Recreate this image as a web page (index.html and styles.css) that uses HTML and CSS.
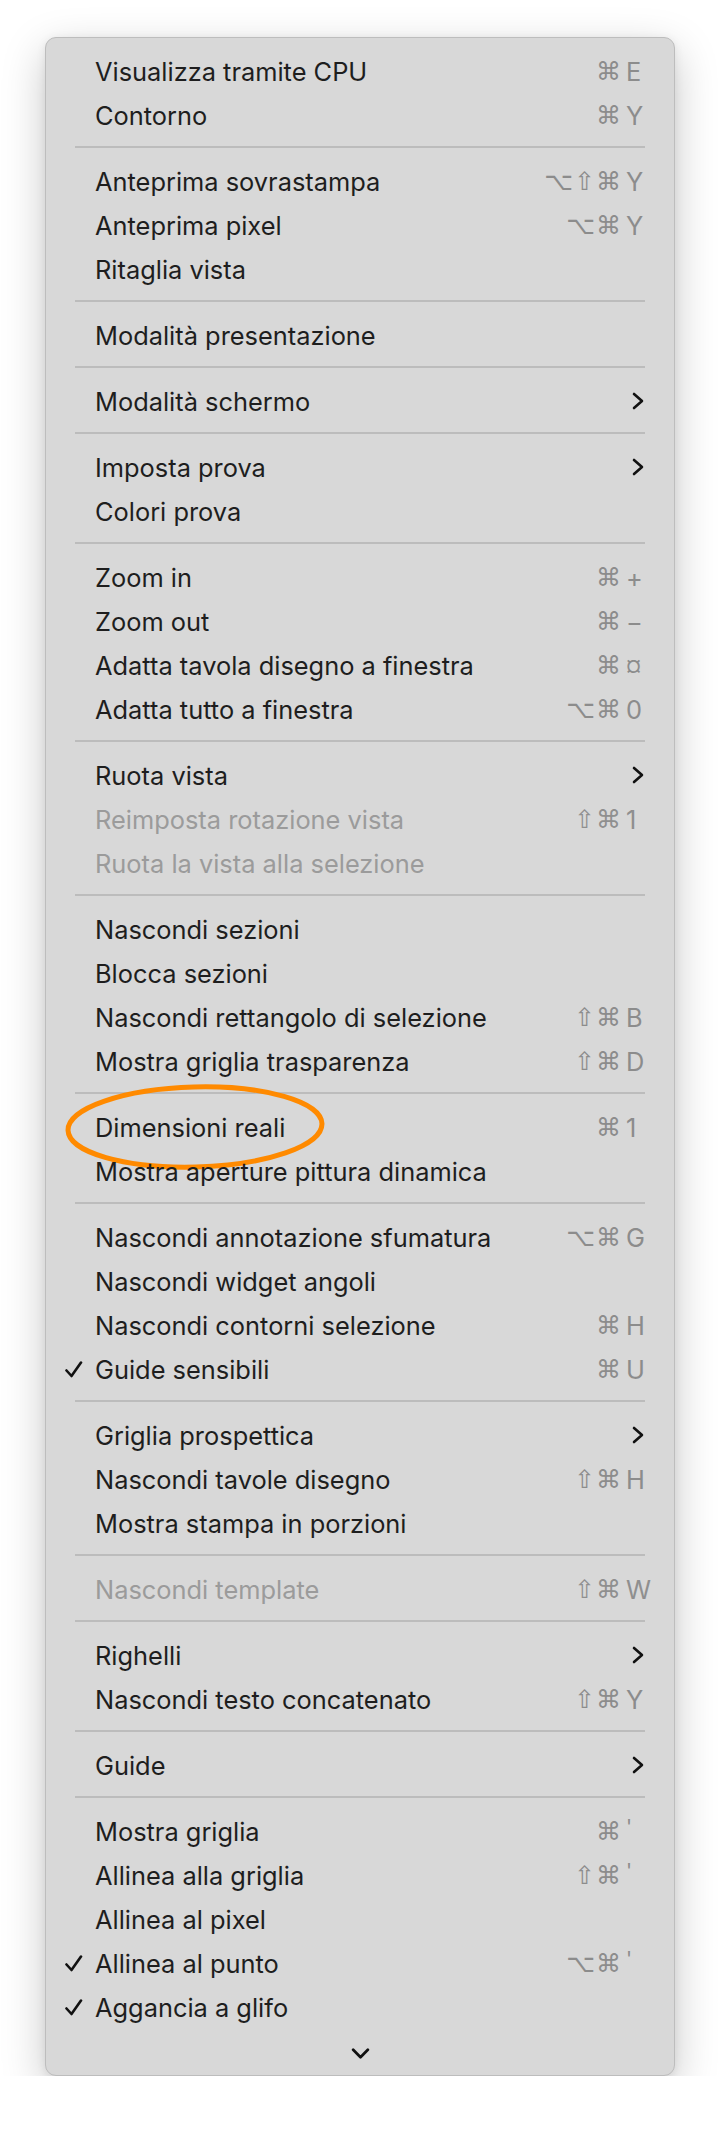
FILE: index.html
```html
<!DOCTYPE html>
<html lang="it">
<head>
    <meta charset="UTF-8">
    <meta name="viewport" content="width=device-width, initial-scale=1.0">
    <title>Menu Visualizza</title>
    <link rel="stylesheet" href="styles.css">
</head>
<body>
    <div class="menu">
        <div class="item"><span class="check"></span><span class="label">Visualizza tramite CPU</span><span class="mods">⌘</span><span class="key">E</span></div>
        <div class="item"><span class="check"></span><span class="label">Contorno</span><span class="mods">⌘</span><span class="key">Y</span></div>
        <div class="sep"></div>
        <div class="item"><span class="check"></span><span class="label">Anteprima sovrastampa</span><span class="mods">⌥⇧⌘</span><span class="key">Y</span></div>
        <div class="item"><span class="check"></span><span class="label">Anteprima pixel</span><span class="mods">⌥⌘</span><span class="key">Y</span></div>
        <div class="item"><span class="check"></span><span class="label">Ritaglia vista</span></div>
        <div class="sep"></div>
        <div class="item"><span class="check"></span><span class="label">Modalità presentazione</span></div>
        <div class="sep"></div>
        <div class="item"><span class="check"></span><span class="label">Modalità schermo</span><svg class="sub" viewBox="0 0 12 18"><polyline points="2,2 10,9 2,16"/></svg></div>
        <div class="sep"></div>
        <div class="item"><span class="check"></span><span class="label">Imposta prova</span><svg class="sub" viewBox="0 0 12 18"><polyline points="2,2 10,9 2,16"/></svg></div>
        <div class="item"><span class="check"></span><span class="label">Colori prova</span></div>
        <div class="sep"></div>
        <div class="item"><span class="check"></span><span class="label">Zoom in</span><span class="mods">⌘</span><span class="key">+</span></div>
        <div class="item"><span class="check"></span><span class="label">Zoom out</span><span class="mods">⌘</span><span class="key">−</span></div>
        <div class="item"><span class="check"></span><span class="label">Adatta tavola disegno a finestra</span><span class="mods">⌘</span><span class="key small">¤</span></div>
        <div class="item"><span class="check"></span><span class="label">Adatta tutto a finestra</span><span class="mods">⌥⌘</span><span class="key">0</span></div>
        <div class="sep"></div>
        <div class="item"><span class="check"></span><span class="label">Ruota vista</span><svg class="sub" viewBox="0 0 12 18"><polyline points="2,2 10,9 2,16"/></svg></div>
        <div class="item disabled"><span class="check"></span><span class="label">Reimposta rotazione vista</span><span class="mods">⇧⌘</span><span class="key">1</span></div>
        <div class="item disabled"><span class="check"></span><span class="label">Ruota la vista alla selezione</span></div>
        <div class="sep"></div>
        <div class="item"><span class="check"></span><span class="label">Nascondi sezioni</span></div>
        <div class="item"><span class="check"></span><span class="label">Blocca sezioni</span></div>
        <div class="item"><span class="check"></span><span class="label">Nascondi rettangolo di selezione</span><span class="mods">⇧⌘</span><span class="key">B</span></div>
        <div class="item"><span class="check"></span><span class="label">Mostra griglia trasparenza</span><span class="mods">⇧⌘</span><span class="key">D</span></div>
        <div class="sep"></div>
        <div class="item marked">
            <span class="check"></span><span class="label">Dimensioni reali</span><span class="mods">⌘</span><span class="key">1</span>
            <svg class="ring" viewBox="0 0 270 96"><ellipse cx="135" cy="48" rx="127" ry="40" transform="rotate(-1.5 135 48)"/></svg>
        </div>
        <div class="item"><span class="check"></span><span class="label">Mostra aperture pittura dinamica</span></div>
        <div class="sep"></div>
        <div class="item"><span class="check"></span><span class="label">Nascondi annotazione sfumatura</span><span class="mods">⌥⌘</span><span class="key">G</span></div>
        <div class="item"><span class="check"></span><span class="label">Nascondi widget angoli</span></div>
        <div class="item"><span class="check"></span><span class="label">Nascondi contorni selezione</span><span class="mods">⌘</span><span class="key">H</span></div>
        <div class="item"><span class="check"><svg viewBox="0 0 18 17"><polyline points="1.5,9.5 6.5,15 16,1.5"/></svg></span><span class="label">Guide sensibili</span><span class="mods">⌘</span><span class="key">U</span></div>
        <div class="sep"></div>
        <div class="item"><span class="check"></span><span class="label">Griglia prospettica</span><svg class="sub" viewBox="0 0 12 18"><polyline points="2,2 10,9 2,16"/></svg></div>
        <div class="item"><span class="check"></span><span class="label">Nascondi tavole disegno</span><span class="mods">⇧⌘</span><span class="key">H</span></div>
        <div class="item"><span class="check"></span><span class="label">Mostra stampa in porzioni</span></div>
        <div class="sep"></div>
        <div class="item disabled"><span class="check"></span><span class="label">Nascondi template</span><span class="mods">⇧⌘</span><span class="key">W</span></div>
        <div class="sep"></div>
        <div class="item"><span class="check"></span><span class="label">Righelli</span><svg class="sub" viewBox="0 0 12 18"><polyline points="2,2 10,9 2,16"/></svg></div>
        <div class="item"><span class="check"></span><span class="label">Nascondi testo concatenato</span><span class="mods">⇧⌘</span><span class="key">Y</span></div>
        <div class="sep"></div>
        <div class="item"><span class="check"></span><span class="label">Guide</span><svg class="sub" viewBox="0 0 12 18"><polyline points="2,2 10,9 2,16"/></svg></div>
        <div class="sep"></div>
        <div class="item"><span class="check"></span><span class="label">Mostra griglia</span><span class="mods">⌘</span><span class="key tick">'</span></div>
        <div class="item"><span class="check"></span><span class="label">Allinea alla griglia</span><span class="mods">⇧⌘</span><span class="key tick">'</span></div>
        <div class="item"><span class="check"></span><span class="label">Allinea al pixel</span></div>
        <div class="item"><span class="check"><svg viewBox="0 0 18 17"><polyline points="1.5,9.5 6.5,15 16,1.5"/></svg></span><span class="label">Allinea al punto</span><span class="mods">⌥⌘</span><span class="key tick">'</span></div>
        <div class="item"><span class="check"><svg viewBox="0 0 18 17"><polyline points="1.5,9.5 6.5,15 16,1.5"/></svg></span><span class="label">Aggancia a glifo</span></div>
        <div class="more">
            <svg viewBox="0 0 20 12"><polyline points="2,2 10,10 18,2"/></svg>
        </div>
    </div>
</body>
</html>
```

FILE: styles.css
```css
* {
    box-sizing: border-box;
    margin: 0;
    padding: 0;
}

body {
    background: #fff;
    font-family: Inter, "Liberation Sans", sans-serif;
    padding: 37px 0 0 45px;
}

.menu {
    width: 630px;
    padding-top: 11px;
    background: #d8d8d8;
    border: 1px solid #bdbdbd;
    border-radius: 11px;
    box-shadow: 0 14px 44px rgba(0, 0, 0, 0.22), 0 2px 10px rgba(0, 0, 0, 0.08);
}

.item {
    position: relative;
    display: flex;
    align-items: center;
    height: 44px;
    padding: 0 30px 0 19px;
    font-size: 25.4px;
    color: #1e1e1e;
}

.check {
    width: 30px;
    flex-shrink: 0;
    display: flex;
    align-items: center;
}

.check svg {
    width: 18px;
    height: 17px;
    fill: none;
    stroke: #111;
    stroke-width: 2.6;
    stroke-linecap: round;
    stroke-linejoin: round;
}

.label {
    flex: 1;
    white-space: nowrap;
}

.mods {
    font-family: "DejaVu Sans", sans-serif;
    font-size: 25px;
    color: #8c8c8c;
    letter-spacing: 1px;
}

.key {
    width: 22px;
    padding-left: 4px;
    color: #8c8c8c;
}

.key.small {
    font-size: 21px;
}

.key.tick {
    align-self: flex-start;
    padding-top: 6px;
    font-size: 20px;
}

.disabled .label {
    color: #9b9b9b;
}

.disabled .mods, .disabled .key {
    color: #8f8f8f;
}

.sub {
    width: 12px;
    height: 18px;
    fill: none;
    stroke: #111;
    stroke-width: 2.6;
    stroke-linecap: round;
    stroke-linejoin: round;
}

.sep {
    height: 22px;
    display: flex;
    align-items: center;
    padding: 0 29px;
}

.sep::after {
    content: "";
    flex: 1;
    height: 2px;
    margin-top: -2px;
    background: #bcbcbc;
}

.ring {
    position: absolute;
    left: 14px;
    top: -26px;
    width: 270px;
    height: 96px;
    fill: none;
    stroke: #ff8a00;
    stroke-width: 5;
}

.more {
    height: 46px;
    display: flex;
    justify-content: center;
    padding-top: 19px;
}

.more svg {
    width: 19px;
    height: 11px;
    fill: none;
    stroke: #111;
    stroke-width: 3;
    stroke-linecap: round;
    stroke-linejoin: round;
}
```
